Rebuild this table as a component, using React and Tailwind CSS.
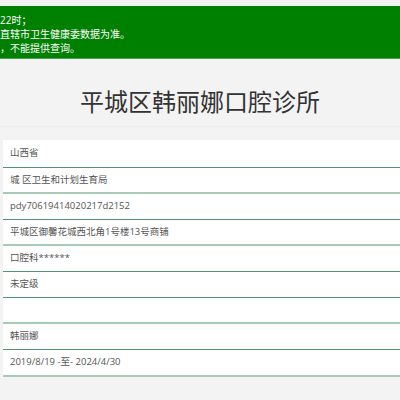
const rows = [
  { text: "山西省", h: "h-[28px]", line: "border-b border-[#4f9670]" },
  { text: "城 区卫生和计划生育局", h: "h-[26px]", line: "border-b-2 border-[#a6cbb6]" },
  { text: "pdy70619414020217d2152", h: "h-[26px]", line: "border-b border-[#4f9670]" },
  { text: "平城区御馨花城西北角1号楼13号商铺", h: "h-[26px]", line: "border-b-2 border-[#a6cbb6]" },
  { text: "口腔科******", h: "h-[26px]", line: "border-b border-[#4f9670]" },
  { text: "未定级", h: "h-[26px]", line: "border-b border-[#4f9670]" },
  { text: "", h: "h-[26px]", line: "border-b-2 border-[#a6cbb6]" },
  { text: "韩丽娜", h: "h-[26px]", line: "border-b border-[#4f9670]" },
  { text: "2019/8/19 -至- 2024/4/30", h: "h-[27px]", line: "border-b-2 border-[#a6cbb6]" },
];

function App() {
  return (
    <div
      className="min-h-[400px] bg-[#f3f3f3] overflow-hidden"
      style={{ fontFamily: '"Open Sans", "Noto Sans CJK SC", sans-serif' }}
    >
      <div className="pt-[6px]">
        <div className="h-[53px] bg-[#008000] border-b border-[#4fa04f] pt-[7px] text-white text-[10px] leading-[14px] whitespace-nowrap">
          <div>22时；</div>
          <div>直辖市卫生健康委数据为准。</div>
          <div>，不能提供查询。</div>
        </div>
      </div>

      <div className="h-[68px] pt-[31px] border-b border-[#ececec] text-center">
        <h1 className="text-[24px] leading-[24px] text-[#333]">平城区韩丽娜口腔诊所</h1>
      </div>

      <div className="mt-[13px] ml-[3px] bg-white">
        {rows.map((r, i) => (
          <div
            key={i}
            className={`${r.h} ${r.line} flex items-center pl-[7px] text-[9.5px] text-[#555]`}
          >
            {r.text}
          </div>
        ))}
      </div>
    </div>
  );
}

export default App;
